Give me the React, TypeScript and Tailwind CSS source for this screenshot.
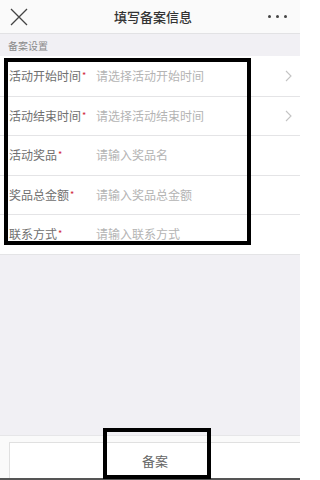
import React from 'react';

const rows = [
  { label: '活动开始时间', placeholder: '请选择活动开始时间', arrow: true },
  { label: '活动结束时间', placeholder: '请选择活动结束时间', arrow: true },
  { label: '活动奖品', placeholder: '请输入奖品名', arrow: false },
  { label: '奖品总金额', placeholder: '请输入奖品总金额', arrow: false },
  { label: '联系方式', placeholder: '请输入联系方式', arrow: false },
];

const font = { fontFamily: '"Noto Sans CJK SC", "Liberation Sans", sans-serif' };

export default function App() {
  return (
    <div className="relative w-[300px] h-[480px] flex flex-col bg-[#f1f0f4] overflow-hidden" style={font}>
      {/* Header */}
      <div className="h-[34px] shrink-0 flex items-center justify-between bg-[#fafafa] border-b border-[#e2e2e4] px-[10px]">
        <svg width="18" height="18" viewBox="0 0 18 18" className="text-[#444]">
          <path d="M1 1L17 17M17 1L1 17" stroke="currentColor" strokeWidth="1.3" fill="none" />
        </svg>
        <div className="text-[13px] text-[#333] font-medium ml-[10px]">填写备案信息</div>
        <div className="flex gap-[5px] items-center mr-[3px]">
          <span className="w-[3px] h-[3px] rounded-full bg-[#444]" />
          <span className="w-[3px] h-[3px] rounded-full bg-[#444]" />
          <span className="w-[3px] h-[3px] rounded-full bg-[#444]" />
        </div>
      </div>

      {/* Section label */}
      <div className="h-[22px] shrink-0 flex items-center px-[8px] text-[10px] text-[#8a8a8a]">备案设置</div>

      {/* Form rows */}
      <div className="shrink-0 bg-white border-b border-[#e4e4e6]">
        {rows.map((r, i) => (
          <div
            key={r.label}
            className={`h-[39.5px] flex items-center pl-[9px] pr-[8px] ${i > 0 ? 'border-t border-[#e4e4e6]' : ''}`}
          >
            <div className="w-[87px] text-[12px] text-[#707070] leading-none whitespace-nowrap">
              {r.label}
              <span className="relative top-[-2px] text-[#d0283c] text-[9px] ml-[1px]">*</span>
            </div>
            <div className="flex-1 text-[12px] text-[#b4b4b4] whitespace-nowrap">{r.placeholder}</div>
            {r.arrow && (
              <svg width="7" height="12" viewBox="0 0 7 12" className="text-[#c4c4c4]">
                <path d="M1 1L6 6L1 11" stroke="currentColor" strokeWidth="1.1" fill="none" />
              </svg>
            )}
          </div>
        ))}
      </div>

      <div className="flex-1" />

      {/* Footer */}
      <div className="h-[45px] shrink-0 bg-[#fafafa] border-t border-[#e6e6e8] pl-[9px] pt-[6px] border-b-2 border-b-[#555]">
        <button className="w-full h-full bg-white border border-[#e0e0e0] border-r-0 border-b-0 text-[13px] text-[#666]" style={font}>
          备案
        </button>
      </div>

      {/* Annotation boxes */}
      <div className="absolute left-[4px] top-[58px] w-[247px] h-[187px] border-[4px] border-black pointer-events-none" />
      <div className="absolute left-[103px] top-[428px] w-[108px] h-[51px] border-[4px] border-black pointer-events-none" />
    </div>
  );
}
